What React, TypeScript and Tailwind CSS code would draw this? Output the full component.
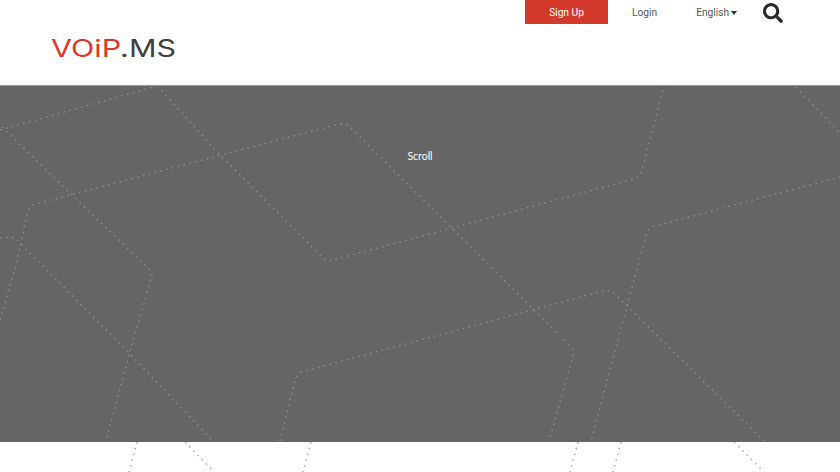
import { FaSearch } from 'react-icons/fa';

const heroLines = [
  'M0 130 L150 88 Q158 86 163 92 L217 152 L323 258 Q327 262 333 260 L634 179 Q640 177 642 170 L664 86',
  'M0 320 L17 262 L27 214 Q29 206 36 204 L335 125 Q345 122 351 128 L487 263 L571 347 Q574 351 573 356 L549 441',
  'M0 238 L10 237 Q15 237 19 242 L128 352 L213 441',
  'M2 127 L70 193 L148 268 Q153 273 151 279 L129 355 L106 441',
  'M280 441 L295 381 Q297 373 305 371 L603 291 Q610 289 616 295 L764 441',
  'M840 177 L655 226 Q648 228 646 235 L591 441',
  'M796 87 L840 133',
];

const footerLines = [
  'M137 442 L129 472',
  'M185 442 L214 472',
  'M311 442 L303 472',
  'M578 442 L570 472',
  'M621 442 L613 472',
  'M734 442 L764 472',
];

function DottedLines({ lines, color, top, height }: { lines: string[]; color: string; top: number; height: number }) {
  return (
    <svg className="absolute inset-0 h-full w-full" viewBox={`0 ${top} 840 ${height}`} fill="none">
      {lines.map((d) => (
        <path key={d} d={d} stroke={color} strokeWidth="1.5" strokeDasharray="1.5 4.5" />
      ))}
    </svg>
  );
}

export default function App() {
  return (
    <div className="h-[472px] w-[840px] overflow-hidden bg-white font-['Roboto',sans-serif]">
      <header className="h-[85px]">
        <nav className="flex h-6 items-center text-[10.2px] text-[#555555]">
          <a className="ml-[525px] flex h-6 w-[83px] items-center justify-center bg-[#d43a2c] pt-px text-white">Sign Up</a>
          <a className="ml-[24px] pt-px">Login</a>
          <a className="ml-[39px] flex items-center gap-[2px] pt-px">
            English
            <span className="mt-[2px] border-x-[3.5px] border-t-[4px] border-x-transparent border-t-[#333333]" />
          </a>
          <FaSearch className="ml-[26px] mt-[1px] h-[20px] w-[20px] text-[#2b2b2b]" />
        </nav>
        <svg className="ml-[51px] mt-[14px] block h-[22px] w-[126px] overflow-visible" viewBox="0 0 126 22">
          <text x="0" y="19" fontFamily="Inter, sans-serif" fontSize="24" fontWeight="400" textLength="125" lengthAdjust="spacingAndGlyphs">
            <tspan fill="#e2352a">VOiP</tspan>
            <tspan fill="#404040">.MS</tspan>
          </text>
        </svg>
      </header>

      <section className="relative h-[357px] border-t border-[#999999] bg-[#656565] bg-[repeating-conic-gradient(#636363_0_25%,#676767_0_50%)] bg-[length:2px_2px]">
        <DottedLines lines={heroLines} color="#8f8f8f" top={86} height={356} />
        <p className="relative pt-[63px] text-center font-['Lato',sans-serif] text-[10.5px] leading-[14px] text-white">Scroll</p>
      </section>

      <section className="relative h-[30px] bg-white">
        <DottedLines lines={footerLines} color="#a8a8a8" top={442} height={30} />
      </section>
    </div>
  );
}
